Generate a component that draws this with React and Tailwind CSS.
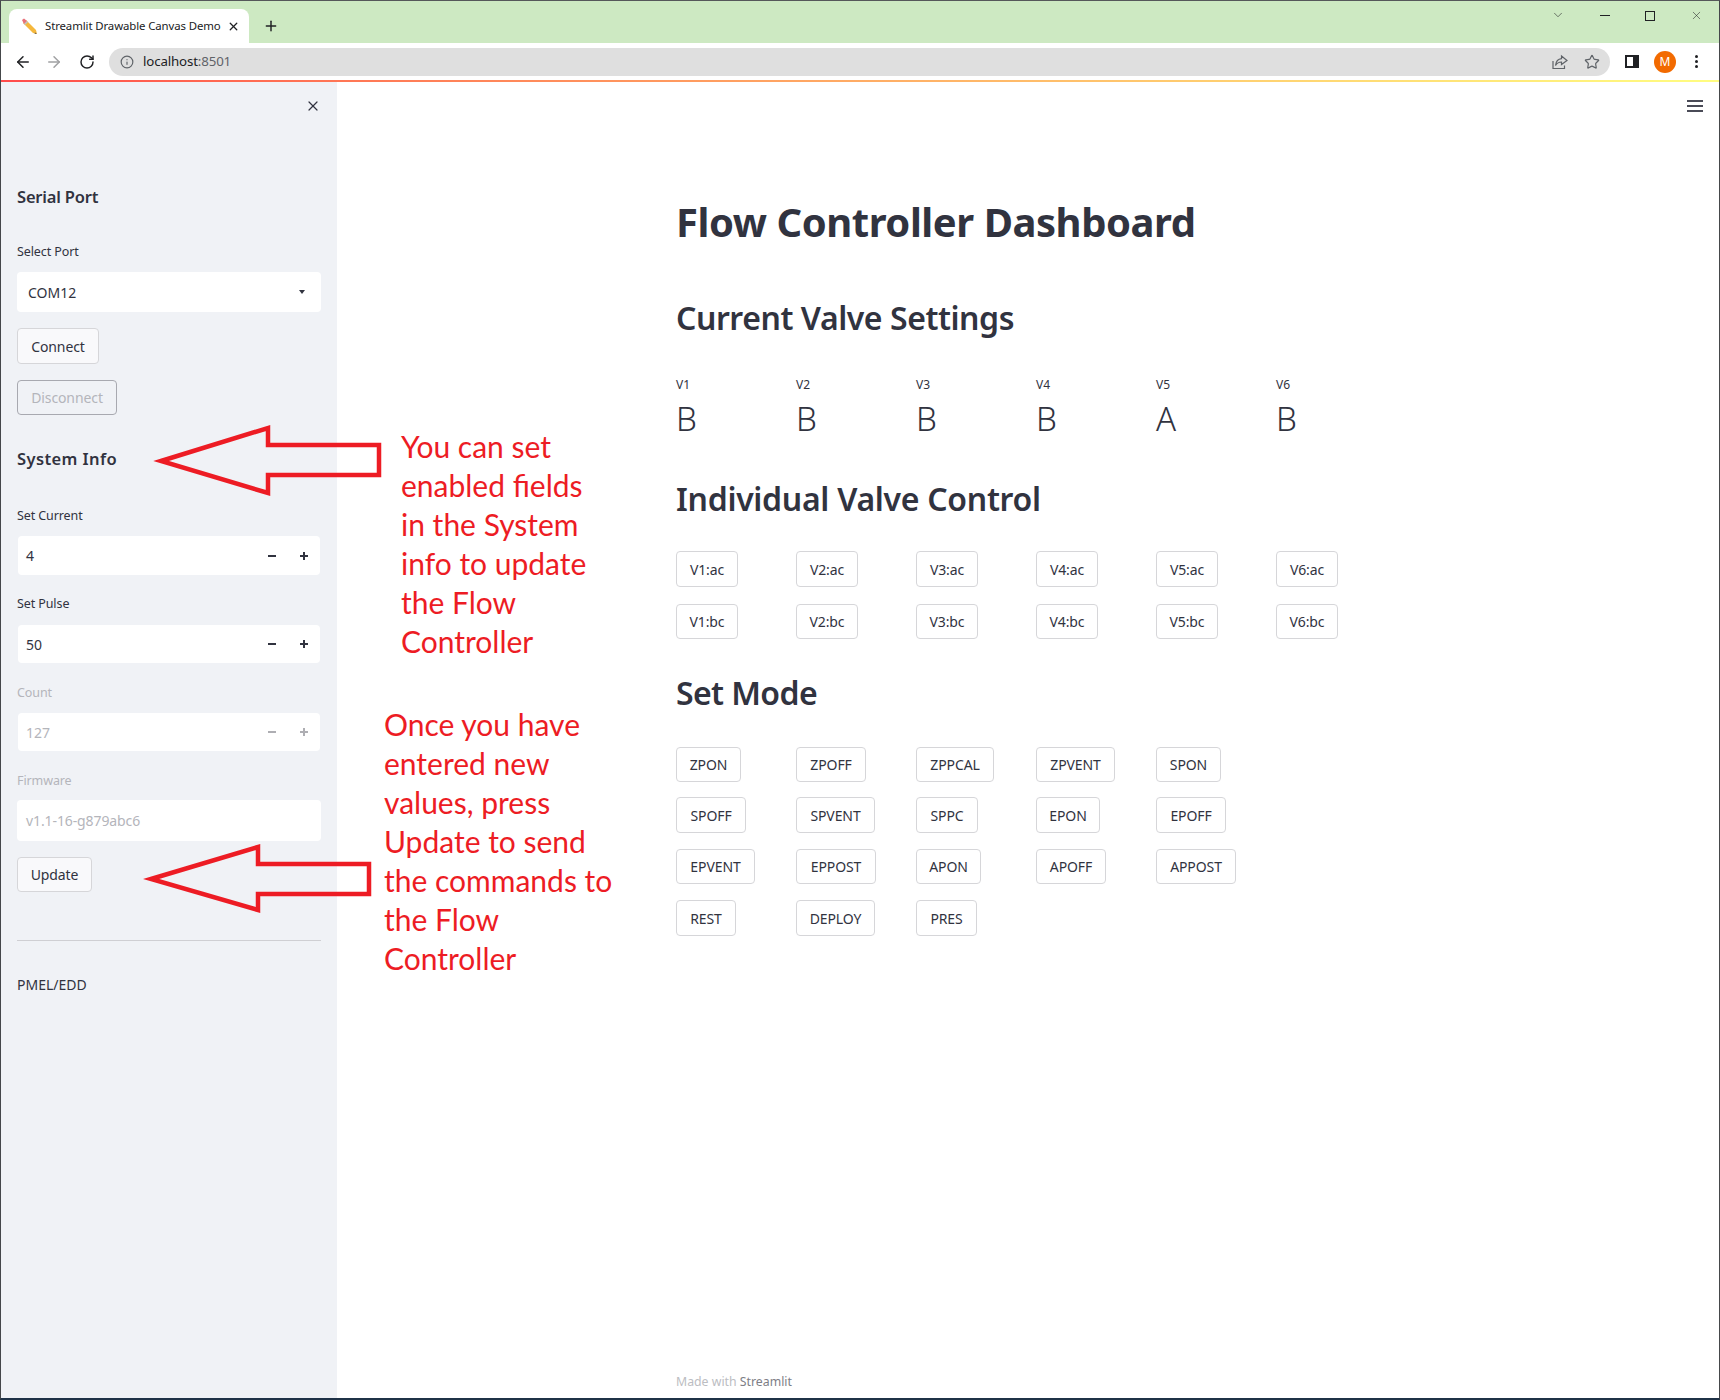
import React from 'react';
import { ArrowLeft, ArrowRight, RotateCw, Info, Star, X, Plus, ChevronDown } from 'lucide-react';

const valves = ['V1', 'V2', 'V3', 'V4', 'V5', 'V6'];
const settings = ['B', 'B', 'B', 'B', 'A', 'B'];

const modeRows = [
  [['ZPON', 'w-[65px]'], ['ZPOFF', 'w-[70px]'], ['ZPPCAL', 'w-[78px]'], ['ZPVENT', 'w-[79px]'], ['SPON', 'w-[65px]']],
  [['SPOFF', 'w-[70px]'], ['SPVENT', 'w-[79px]'], ['SPPC', 'w-[62px]'], ['EPON', 'w-[64px]'], ['EPOFF', 'w-[70px]']],
  [['EPVENT', 'w-[79px]'], ['EPPOST', 'w-[80px]'], ['APON', 'w-[65px]'], ['APOFF', 'w-[70px]'], ['APPOST', 'w-[80px]']],
  [['REST', 'w-[60px]'], ['DEPLOY', 'w-[79px]'], ['PRES', 'w-[61px]']],
];
const modeRowClass = ['mt-[32px] h-[35px]', 'mt-[15px] h-[36px]', 'mt-4 h-[35px]', 'mt-4 h-[36px]'];

const note1 = ['You can set', 'enabled fields', 'in the System', 'info to update', 'the Flow', 'Controller'];
const note2 = ['Once you have', 'entered new', 'values, press', 'Update to send', 'the commands to', 'the Flow', 'Controller'];

function Btn({ children, className = '' }) {
  return (
    <button className={`flex items-center justify-center rounded border border-[#d6d6d9] text-[14px] tracking-[-0.1px] text-[#31333f] ${className}`}>
      {children}
    </button>
  );
}

function Label({ children, className = '', muted }) {
  return (
    <div className={`h-5 text-[12.500px] leading-5 tracking-[-0.1px] ${muted ? 'text-[#b4b5bb]' : 'text-[#31333f]'} ${className}`}>
      {children}
    </div>
  );
}

function NumberInput({ value, className = '', muted }) {
  const color = muted ? 'bg-[#aeaeb3]' : 'bg-[#31333f]';
  return (
    <div className={`mx-px flex items-center rounded bg-white pl-2 pr-3 ${className}`}>
      <span className={`flex-1 text-[14px] ${muted ? 'text-[#b4b5bb]' : 'text-[#31333f]'}`}>{value}</span>
      <span className={`h-[2px] w-2 ${color}`} />
      <span className={`relative ml-6 h-2 w-2`}>
        <span className={`absolute left-0 top-[3px] h-[2px] w-2 ${color}`} />
        <span className={`absolute left-[3px] top-0 h-2 w-[2px] ${color}`} />
      </span>
    </div>
  );
}

function Pencil() {
  return (
    <svg width="18" height="18" viewBox="0 0 18 18">
      <path d="M6 3 L16 13 L17 17 L13 16 L3 6 Z" fill="#f5b83d" />
      <path d="M2 3 L4 1.500 L7 4 L4 7 Z" fill="#e8707a" />
      <path d="M4 7 L7 4 L8 5 L5 8 Z" fill="#b9c2cc" />
      <path d="M15 15.500 L17 17 L14.500 16.500 Z" fill="#3d3d3d" />
    </svg>
  );
}

function BrowserChrome() {
  return (
    <div className="shrink-0 font-['Noto_Sans',sans-serif]">
      <div className="flex h-[42px] items-end bg-[#cde9c2] pl-2">
        <div className="flex h-[34px] w-[240px] items-center rounded-t-lg bg-white pl-[11px] pr-[9px] text-[#202124]">
          <Pencil />
          <span className="ml-[7px] flex-1 text-[11.400px] tracking-[-0.1px] whitespace-nowrap">Streamlit Drawable Canvas Demo</span>
          <X size={13} strokeWidth={2.4} />
        </div>
        <div className="ml-[14px] flex h-[34px] items-center">
          <Plus size={16} strokeWidth={2.2} className="text-[#202124]" />
        </div>
        <div className="ml-auto flex h-[30px] items-start self-start pr-[16px] text-[#202124]">
          <ChevronDown size={14} strokeWidth={1} className="mt-[7px]" />
          <span className="ml-[35px] mt-[14px] h-px w-[10px] bg-[#202124]" />
          <span className="ml-[35px] mt-[10px] h-[10px] w-[10px] border border-[#202124]" />
          <X size={13} strokeWidth={1} className="ml-[35px] mt-[8px]" />
        </div>
      </div>
      <div className="flex h-[37px] items-center bg-white pl-[13px] pr-[21px]">
        <ArrowLeft size={18} strokeWidth={2} className="text-[#202124]" />
        <ArrowRight size={18} strokeWidth={2} className="ml-[13px] text-[#a0a1a3]" />
        <RotateCw size={16} strokeWidth={2.2} className="ml-[16px] text-[#202124]" />
        <div className="ml-[14px] flex h-[28px] flex-1 items-center rounded-full bg-[#dfdfdf] pl-[11px] pr-[10px]">
          <Info size={14} strokeWidth={2} className="text-[#5f6368]" />
          <span className="ml-[9px] flex-1 text-[13.300px] tracking-[-0.15px] text-[#202124]">
            localhost<span className="text-[#5f6368]">:8501</span>
          </span>
          <svg width="16" height="16" viewBox="0 0 16 16" fill="none" stroke="#5f6368" strokeWidth="1.200">
            <path d="M1 7 V14.500 H12.500 V11.500" />
            <path d="M9.500 2 L15 6.500 L9.500 10.500 V8 C7 8 5 9 3.500 11.500 C4 7.500 6 5 9.500 4.700 Z" />
          </svg>
          <Star size={16} strokeWidth={1.8} className="ml-[16px] text-[#5f6368]" />
        </div>
        <div className="ml-[15px] flex h-[13px] w-[14px] justify-start border-2 border-[#202124] bg-[#202124]">
          <span className="h-full w-[6px] bg-white" />
        </div>
        <div className="ml-[15px] flex h-[22px] w-[22px] items-center justify-center rounded-full bg-[#f26a00] text-[12px] text-white">M</div>
        <div className="ml-[19px] flex w-[3px] flex-col gap-[2px]">
          <span className="h-[3px] w-[3px] rounded-full bg-[#202124]" />
          <span className="h-[3px] w-[3px] rounded-full bg-[#202124]" />
          <span className="h-[3px] w-[3px] rounded-full bg-[#202124]" />
        </div>
      </div>
      <div className="h-[2px] bg-gradient-to-r from-[#ff4b4b] to-[#fffd80]" />
    </div>
  );
}

function Sidebar() {
  return (
    <aside className="flex w-[336px] shrink-0 flex-col bg-[#f0f2f6] px-4">
      <div className="flex justify-end pt-[18px] text-[#31333f]">
        <X size={16} strokeWidth={1.8} className="-my-[2px]" />
      </div>
      <div className="mt-[73px] h-6 text-[16.500px] font-semibold leading-6 tracking-[-0.2px] text-[#31333f]">Serial Port</div>
      <Label className="mt-[33px]">Select Port</Label>
      <div className="mt-[10px] flex h-[40px] items-center rounded bg-white pl-[11px] pr-4 text-[14px] text-[#31333f]">
        <span className="flex-1">COM12</span>
        <span className="h-0 w-0 border-x-[3.500px] border-t-[4px] border-x-transparent border-t-[#31333f]" />
      </div>
      <Btn className="mt-4 h-[36px] w-[82px] bg-[#f9f9fb]">Connect</Btn>
      <Btn className="mt-4 h-[35px] w-[100px] !border-[#a8a9b0] !text-[#b4b5bb]">Disconnect</Btn>
      <div className="mt-[32px] h-6 text-[16.500px] font-semibold leading-6 tracking-[0.4px] text-[#31333f]">System Info</div>
      <Label className="mt-[35px]">Set Current</Label>
      <NumberInput value="4" className="mt-[10px] h-[39px]" />
      <Label className="mt-[19px]">Set Pulse</Label>
      <NumberInput value="50" className="mt-[11px] h-[38px]" />
      <Label className="mt-[20px]" muted>Count</Label>
      <NumberInput value="127" className="mt-[10px] h-[38px]" muted />
      <Label className="mt-[20px]" muted>Firmware</Label>
      <div className="mt-[9px] flex h-[41px] items-center rounded bg-white pl-[9px] text-[14px] tracking-[-0.1px] text-[#b4b5bb]">v1.1-16-g879abc6</div>
      <Btn className="mt-4 h-[35px] w-[75px] bg-[#f9f9fb]">Update</Btn>
      <div className="mt-[48px] h-px bg-[#cfcfd3]" />
      <div className="mt-[34px] h-5 text-[14px] leading-5 text-[#31333f]">PMEL/EDD</div>
    </aside>
  );
}

function Main() {
  return (
    <main className="relative flex flex-1 flex-col pl-[339px] text-[#31333f]">
      <div className="absolute right-[16px] top-[18px] flex w-4 flex-col gap-[3px]">
        <span className="h-[2px] bg-[#4a4b57]" />
        <span className="h-[2px] bg-[#4a4b57]" />
        <span className="h-[2px] bg-[#4a4b57]" />
      </div>
      <h1 className="mt-[115px] h-[50px] text-[40px] font-bold leading-[50px] tracking-[-0.45px]">Flow Controller Dashboard</h1>
      <h2 className="mt-[49px] h-[44px] text-[32px] font-semibold leading-[44px] tracking-[-0.45px]">Current Valve Settings</h2>
      <div className="mt-[35px] grid h-5 grid-cols-[repeat(6,120px)] text-[12px] leading-5">
        {valves.map((v) => <div key={v}>{v}</div>)}
      </div>
      <div className="mt-[2px] grid h-[44px] grid-cols-[repeat(6,120px)] text-[33px] font-light leading-[44px]">
        {settings.map((s, i) => <div key={i}>{s}</div>)}
      </div>
      <h2 className="mt-[36px] h-[44px] text-[32px] font-semibold leading-[44px] tracking-[-0.3px]">Individual Valve Control</h2>
      <div className="mt-[30px] grid h-[36px] grid-cols-[repeat(6,120px)]">
        {valves.map((v) => <Btn key={v} className="w-[62px]">{v}:ac</Btn>)}
      </div>
      <div className="mt-[17px] grid h-[35px] grid-cols-[repeat(6,120px)]">
        {valves.map((v) => <Btn key={v} className="w-[62px]">{v}:bc</Btn>)}
      </div>
      <h2 className="mt-[32px] h-[44px] text-[32px] font-semibold leading-[44px] tracking-[-0.6px]">Set Mode</h2>
      {modeRows.map((row, i) => (
        <div key={i} className={`grid grid-cols-[repeat(6,120px)] ${modeRowClass[i]}`}>
          {row.map(([name, w]) => <Btn key={name} className={w}>{name}</Btn>)}
        </div>
      ))}
      <div className="mt-auto h-[26px] text-[12.300px] leading-5 text-[#bcbdc2]">
        Made with <span className="text-[#7d7e86]">Streamlit</span>
      </div>
    </main>
  );
}

function Annotations() {
  return (
    <>
      <svg className="absolute left-0 top-0" width="400" height="940" fill="none" stroke="#ed1c24" strokeWidth="4.500" strokeLinejoin="miter">
        <path d="M160 460 L267 427 V444 H378 V474 H267 V492 Z" />
        <path d="M150 878 L257 846 V863 H368 V893 H257 V909 Z" />
      </svg>
      <div className="absolute left-[400px] top-[426px] font-['Lato',sans-serif] text-[30px] leading-[39px] text-[#ed1c24]">
        {note1.map((l) => <div key={l}>{l}</div>)}
      </div>
      <div className="absolute left-[383px] top-[704px] font-['Lato',sans-serif] text-[30px] leading-[39px] text-[#ed1c24]">
        {note2.map((l) => <div key={l}>{l}</div>)}
      </div>
    </>
  );
}

export default function App() {
  return (
    <div className="relative flex h-[1400px] w-[1720px] flex-col overflow-hidden border border-b-2 border-x-[#45474a] border-t-[#55585a] border-b-[#1f3247] bg-white font-['Noto_Sans',sans-serif]">
      <BrowserChrome />
      <div className="flex min-h-0 flex-1">
        <Sidebar />
        <Main />
      </div>
      <Annotations />
    </div>
  );
}
